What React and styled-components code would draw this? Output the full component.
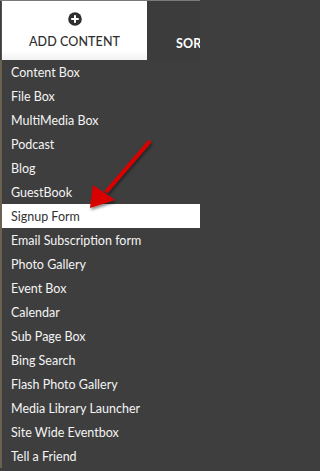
import React from "react";
import styled, { createGlobalStyle } from "styled-components";

const Global = createGlobalStyle`
  html, body { margin: 0; padding: 0; background: #3e3e3e; }
  body { font-family: Lato, "Open Sans", sans-serif; }
`;

const Page = styled.div`
  position: relative;
  width: 200px;
  height: 471px;
  overflow: hidden;
  background: #3e3e3e;
  border-top: 1px solid #7a7a7a;
  box-sizing: border-box;
`;

const Header = styled.div`
  display: flex;
  height: 59px;
  background: #3c3c3c;
`;

const AddTab = styled.div`
  flex: 0 0 146px;
  width: 146px;
  margin-left: 1px;
  background: linear-gradient(#ffffff 85%, #f1f1f1);
  display: flex;
  flex-direction: column;
  align-items: center;
  padding-top: 11px;
  box-sizing: border-box;
  border-left: 1px solid #555;
`;

const TabLabel = styled.div`
  margin-top: 8px;
  font-size: 12.5px;
  font-weight: ${(p) => (p.$light ? 700 : 500)};
  letter-spacing: 0.1px;
  white-space: nowrap;
  color: ${(p) => (p.$light ? "#ffffff" : "#2f2f2f")};
`;

const SortTab = styled.div`
  flex: 1 1 0;
  min-width: 0;
  overflow: hidden;
  display: flex;
  align-items: center;
  padding-left: 29px;
  padding-top: 18px;
  box-sizing: border-box;
`;

const Body = styled.div`
  display: flex;
`;

const Strip = styled.div`
  width: 2px;
  background: #6b6152;
`;

const Menu = styled.ul`
  flex: 1;
  list-style: none;
  margin: 0;
  padding: 0;
  background: #3e3e3e;
`;

const Item = styled.li`
  height: 24px;
  display: flex;
  align-items: center;
  padding-left: 9px;
  font-size: 12.5px;
  color: ${(p) => (p.$active ? "#333333" : "#f4f4f4")};
  background: ${(p) => (p.$active ? "#ffffff" : "transparent")};
  white-space: nowrap;
`;

const ArrowSvg = styled.svg`
  position: absolute;
  left: 84px;
  top: 136px;
  overflow: visible;
`;

const items = [
  "Content Box",
  "File Box",
  "MultiMedia Box",
  "Podcast",
  "Blog",
  "GuestBook",
  "Signup Form",
  "Email Subscription form",
  "Photo Gallery",
  "Event Box",
  "Calendar",
  "Sub Page Box",
  "Bing Search",
  "Flash Photo Gallery",
  "Media Library Launcher",
  "Site Wide Eventbox",
  "Tell a Friend",
];

export default function App() {
  return (
    <>
      <Global />
      <Page>
        <Header>
          <AddTab>
            <svg width="14" height="14" viewBox="0 0 14 14">
              <circle cx="7" cy="7" r="6.8" fill="#2f2f2f" />
              <rect x="6" y="3.2" width="2" height="7.6" fill="#fff" />
              <rect x="3.2" y="6" width="7.6" height="2" fill="#fff" />
            </svg>
            <TabLabel>ADD CONTENT</TabLabel>
          </AddTab>
          <SortTab>
            <TabLabel $light>SORT</TabLabel>
          </SortTab>
        </Header>
        <Body>
          <Strip />
          <Menu>
            {items.map((t) => (
              <Item key={t} $active={t === "Signup Form"}>
                {t}
              </Item>
            ))}
          </Menu>
        </Body>
        <ArrowSvg width="70" height="80" viewBox="0 0 70 80">
          <defs>
            <filter id="sh" x="-30%" y="-30%" width="160%" height="160%">
              <feGaussianBlur in="SourceAlpha" stdDeviation="1.5" />
              <feOffset dx="1" dy="2" result="b" />
              <feComponentTransfer>
                <feFuncA type="linear" slope="0.5" />
              </feComponentTransfer>
              <feMerge>
                <feMergeNode />
                <feMergeNode in="SourceGraphic" />
              </feMerge>
            </filter>
          </defs>
          <g filter="url(#sh)">
            <line x1="66" y1="4" x2="22" y2="55" stroke="#d90000" strokeWidth="4" />
            <polygon points="6,71 9,48 31,63" fill="#d90000" />
          </g>
        </ArrowSvg>
      </Page>
    </>
  );
}
